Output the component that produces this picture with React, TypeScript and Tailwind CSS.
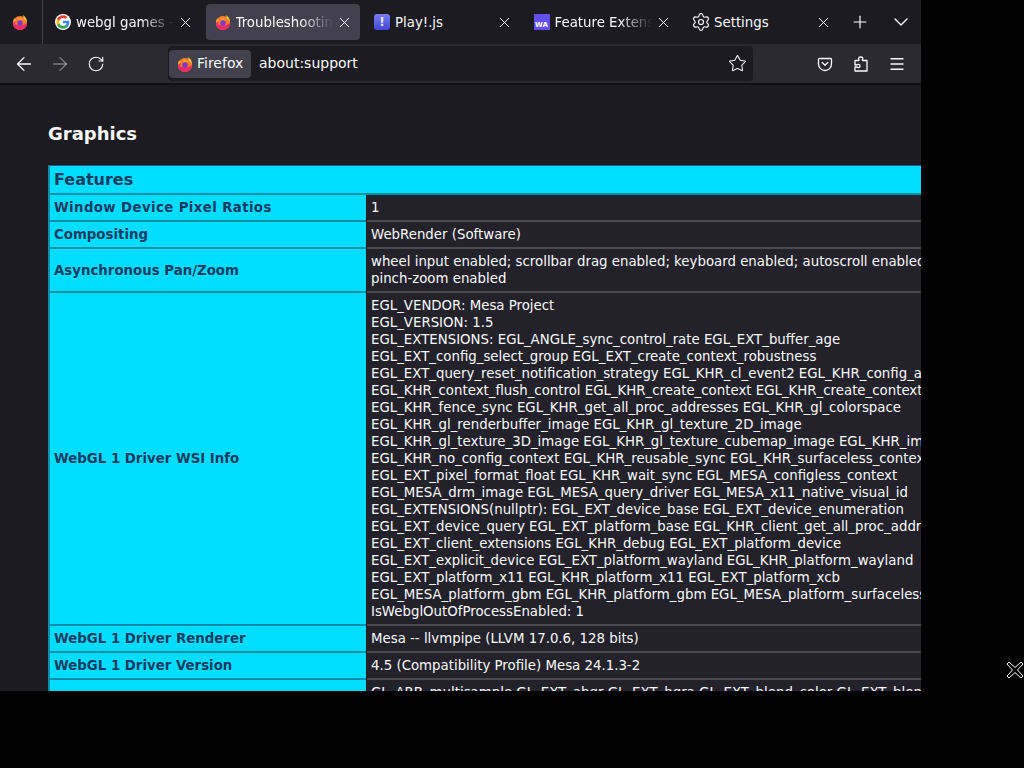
import { ReactNode } from "react";
import { ArrowLeft, ArrowRight, ChevronDown, Menu, Plus, RotateCw, Settings, Star, X } from "lucide-react";

function FirefoxLogo({ size = 16 }: { size?: number }) {
  return (
    <svg width={size} height={size} viewBox="0 0 16 16" className="shrink-0">
      <circle cx="8" cy="9" r="7" fill="#ff7a2b" />
      <path d="M1 9a7 7 0 0 0 14 0c-2 1.500-4 2.500-7 2-3 .5-5-.5-7-2z" fill="#ee2a6b" />
      <path d="M1 9c0 2 1 4 2.500 5.200C3 12 2.500 10 4 7z" fill="#f2336a" />
      <path d="M10.500 1c2.800 1.300 4.800 4 4.500 8-.6-2.500-2-3.600-3.500-4.500.3-1.300-.2-2.600-1-3.500z" fill="#ffc53a" />
      <path d="M2 4.500C1.300 6 1 7.500 1 9c.8-1.500 1.800-2.500 3-3z" fill="#ffb03a" />
      <circle cx="8" cy="9" r="2.700" fill="#7a3bc8" />
      <path d="M5 4c2.500-.6 5 .4 6.500 2.500-1-.5-2.200-.8-3.500-.6C6.800 6 5.700 5 5 4z" fill="#ffa22e" />
    </svg>
  );
}

function GoogleLogo() {
  return (
    <svg width="16" height="16" viewBox="0 0 48 48" className="shrink-0">
      <circle cx="24" cy="24" r="24" fill="#fff" />
      <path d="M43 24.400c0-1.400-.1-2.700-.4-4H24v7.600h10.800c-.5 2.500-1.900 4.600-4 6v5h6.500c3.500-3.400 5.700-8.400 5.700-14.600z" fill="#4285f4" />
      <path d="M24 44c5.400 0 9.900-1.800 13.300-4.900l-6.500-5c-1.800 1.200-4.100 1.900-6.800 1.900-5.200 0-9.600-3.500-11.200-8.300H6.100v5.200C9.400 39.500 16.200 44 24 44z" fill="#34a853" />
      <path d="M12.800 27.700c-.8-2.400-.8-5 0-7.400v-5.200H6.100a20 20 0 0 0 0 17.800z" fill="#fbbc05" />
      <path d="M24 11.900c2.900 0 5.600 1 7.600 3l5.700-5.700C33.900 6 29.400 4 24 4 16.200 4 9.400 8.500 6.100 15.100l6.700 5.200c1.600-4.800 6-8.400 11.200-8.400z" fill="#ea4335" />
    </svg>
  );
}

function PlayIcon() {
  return (
    <span className="flex h-4 w-4 shrink-0 items-center justify-center rounded-[3px] bg-gradient-to-b from-[#7d7df0] to-[#4444d8] text-[12px] leading-none font-bold text-[#e8e8ff]">
      !
    </span>
  );
}

function WaIcon() {
  return (
    <span className="flex h-4 w-4 shrink-0 items-end justify-center bg-[#654ff0] text-[7px] leading-[9px] font-bold text-white">
      WA
    </span>
  );
}

function PocketIcon() {
  return (
    <svg width="16" height="16" viewBox="0 0 16 16" fill="none" stroke="#fbfbfe" strokeWidth="1.300" strokeLinecap="round" strokeLinejoin="round">
      <path d="M2.500 2.500h11a1 1 0 0 1 1 1V8a6.500 6.500 0 0 1-13 0V3.500a1 1 0 0 1 1-1z" />
      <path d="M5.200 6.500 8 9.200l2.800-2.700" />
    </svg>
  );
}

function PuzzleIcon() {
  return (
    <svg width="16" height="16" viewBox="0 0 16 16" fill="none" stroke="#fbfbfe" strokeWidth="1.300" strokeLinejoin="round">
      <path d="M2 4.500h3.500c.5 0 .7-.4.5-.8-.3-.4-.4-.8-.4-1.200C5.600 1.500 6.600 1 7.700 1s2.100.5 2.100 1.500c0 .4-.1.800-.4 1.200-.2.4 0 .8.5.8H14V15H2v-4h1.500c.5 0 .8.2 1.200.5.8.5 2.300-.1 2.300-1.500S5.500 8 4.700 8.500c-.4.3-.7.5-1.200.5H2z" />
    </svg>
  );
}

function Tab({ icon, title, active, fade }: { icon: ReactNode; title: string; active?: boolean; fade?: boolean }) {
  return (
    <div
      className={
        "flex h-9 w-[154.5px] shrink-0 items-center gap-[5px] rounded-[4px] pr-[7px] pl-[9px] " +
        (active ? "bg-[#42414d]" : "")
      }
    >
      {icon}
      <span
        className={
          "min-w-0 flex-1 overflow-hidden pt-px text-[13.33px] whitespace-nowrap text-[#fbfbfe] " +
          (fade ? "[mask-image:linear-gradient(to_right,black_65%,transparent_100%)]" : "")
        }
      >
        {title}
      </span>
      <X size={17} strokeWidth={1.4} className="-ml-[3px] shrink-0 text-[#fbfbfe]" />
    </div>
  );
}

function Row({ label, labelClass, children }: { label: string; labelClass?: string; children: ReactNode }) {
  return (
    <div className="flex">
      <div
        className={
          "flex w-[316px] shrink-0 items-center border-b-2 border-[#0d8ea8] bg-[#00ddff] px-1 py-1 text-[13.33px] leading-[17px] font-bold text-[#143c63] " +
          (labelClass ?? "")
        }
      >
        {label}
      </div>
      <div className="ml-[1px] w-[700px] shrink-0 border-b-2 border-[#4a4950] bg-[#23222b] px-1 py-1 text-[13.33px] leading-[17px] whitespace-nowrap text-[#fbfbfe]">
        {children}
      </div>
    </div>
  );
}

const wsiLines = [
  "EGL_VENDOR: Mesa Project",
  "EGL_VERSION: 1.5",
  "EGL_EXTENSIONS: EGL_ANGLE_sync_control_rate EGL_EXT_buffer_age",
  "EGL_EXT_config_select_group EGL_EXT_create_context_robustness",
  "EGL_EXT_query_reset_notification_strategy EGL_KHR_cl_event2 EGL_KHR_config_attribs",
  "EGL_KHR_context_flush_control EGL_KHR_create_context EGL_KHR_create_context_no_error",
  "EGL_KHR_fence_sync EGL_KHR_get_all_proc_addresses EGL_KHR_gl_colorspace",
  "EGL_KHR_gl_renderbuffer_image EGL_KHR_gl_texture_2D_image",
  "EGL_KHR_gl_texture_3D_image EGL_KHR_gl_texture_cubemap_image EGL_KHR_image_base",
  "EGL_KHR_no_config_context EGL_KHR_reusable_sync EGL_KHR_surfaceless_context",
  "EGL_EXT_pixel_format_float EGL_KHR_wait_sync EGL_MESA_configless_context",
  "EGL_MESA_drm_image EGL_MESA_query_driver EGL_MESA_x11_native_visual_id",
  "EGL_EXTENSIONS(nullptr): EGL_EXT_device_base EGL_EXT_device_enumeration",
  "EGL_EXT_device_query EGL_EXT_platform_base EGL_KHR_client_get_all_proc_addresses",
  "EGL_EXT_client_extensions EGL_KHR_debug EGL_EXT_platform_device",
  "EGL_EXT_explicit_device EGL_EXT_platform_wayland EGL_KHR_platform_wayland",
  "EGL_EXT_platform_x11 EGL_KHR_platform_x11 EGL_EXT_platform_xcb",
  "EGL_MESA_platform_gbm EGL_KHR_platform_gbm EGL_MESA_platform_surfaceless",
  "IsWebglOutOfProcessEnabled: 1",
];

export default function App() {
  return (
    <div className="relative h-[768px] w-[1024px] overflow-hidden bg-black font-['DejaVu_Sans',sans-serif]">
      <div className="flex h-[691px] w-[921px] flex-col overflow-hidden bg-[#1c1b22]">
        {/* tab strip */}
        <div className="flex h-[44px] shrink-0 items-center">
          <div className="flex h-full w-[43px] shrink-0 items-center justify-center border-r border-[#42414d] pr-[2px]">
            <FirefoxLogo />
          </div>
          <div className="ml-[3px] flex gap-[5px]">
            <Tab icon={<GoogleLogo />} title="webgl games - Google" fade />
            <Tab icon={<FirefoxLogo />} title="Troubleshooting Information" active fade />
            <Tab icon={<PlayIcon />} title="Play!.js" />
            <Tab icon={<WaIcon />} title="Feature Extensions" fade />
            <Tab icon={<Settings size={20} strokeWidth={1.4} className="-mx-[2px] shrink-0 text-[#fbfbfe]" />} title="Settings" />
          </div>
          <Plus size={20} strokeWidth={1.4} className="ml-[11.5px] shrink-0 text-[#fbfbfe]" />
          <ChevronDown size={24} strokeWidth={1.4} className="ml-[19px] shrink-0 text-[#fbfbfe]" />
        </div>

        {/* toolbar */}
        <div className="flex h-[41px] shrink-0 items-center border-b-2 border-[#101014] bg-[#2b2a33] pl-[13px]">
          <ArrowLeft size={22} strokeWidth={1.4} className="shrink-0 text-[#fbfbfe]" />
          <ArrowRight size={22} strokeWidth={1.4} className="ml-[14px] shrink-0 text-[#fbfbfe]/40" />
          <RotateCw size={18} strokeWidth={1.5} className="ml-[16px] shrink-0 text-[#fbfbfe]" />
          <div className="ml-[63px] flex h-[35px] w-[585px] shrink-0 items-center rounded-[4px] bg-[#1c1b22] pr-[6px] pl-[1px]">
            <div className="flex h-[28px] w-[82px] items-center gap-[4px] rounded-[4px] bg-[#42414d] pl-2 text-[14px] text-[#fbfbfe]">
              <FirefoxLogo />
              Firefox
            </div>
            <span className="ml-2 flex-1 text-[14px] text-[#fbfbfe]">about:support</span>
            <Star size={19} strokeWidth={1.3} className="text-[#fbfbfe]" />
          </div>
          <div className="ml-[64px] flex items-center gap-5">
            <PocketIcon />
            <PuzzleIcon />
            <Menu size={18} strokeWidth={1.8} className="-ml-px text-[#fbfbfe]" />
          </div>
        </div>

        {/* page content */}
        <div className="min-h-0 flex-1 overflow-hidden pt-[36px] pl-[48px]">
          <h2 className="text-[18px] leading-[26px] font-bold text-[#fbfbfe]">Graphics</h2>
          <div className="mt-[18px] w-[1018px] border-t border-l-2 border-t-[#1d5a8c] border-l-[#0d8ea8]">
            <div className="border-b-2 border-[#0d8ea8] bg-[#00ddff] px-1 py-[4px] text-[16px] leading-[19px] font-bold text-[#143c63]">
              Features
            </div>
            <Row label="Window Device Pixel Ratios" labelClass="tracking-[0.38px]">1</Row>
            <Row label="Compositing">WebRender (Software)</Row>
            <Row label="Asynchronous Pan/Zoom">
              <div>wheel input enabled; scrollbar drag enabled; keyboard enabled; autoscroll enabled;</div>
              <div>pinch-zoom enabled</div>
            </Row>
            <Row label="WebGL 1 Driver WSI Info">
              {wsiLines.map((line) => (
                <div key={line}>{line}</div>
              ))}
            </Row>
            <Row label="WebGL 1 Driver Renderer">Mesa -- llvmpipe (LLVM 17.0.6, 128 bits)</Row>
            <Row label="WebGL 1 Driver Version">4.5 (Compatibility Profile) Mesa 24.1.3-2</Row>
            <Row label="">GL_ARB_multisample GL_EXT_abgr GL_EXT_bgra GL_EXT_blend_color GL_EXT_blend_minmax</Row>
          </div>
        </div>
      </div>

      {/* x11 cursor */}
      <svg width="18" height="18" viewBox="0 0 18 18" className="absolute top-[661px] left-[1006px]">
        <path d="M3 1 9 6.500 15 1l2 2-5.500 6 5.500 6-2 2-6-5.500L3 17l-2-2 5.500-6L1 3z" fill="#000" stroke="#fff" strokeWidth="1" />
      </svg>
    </div>
  );
}
